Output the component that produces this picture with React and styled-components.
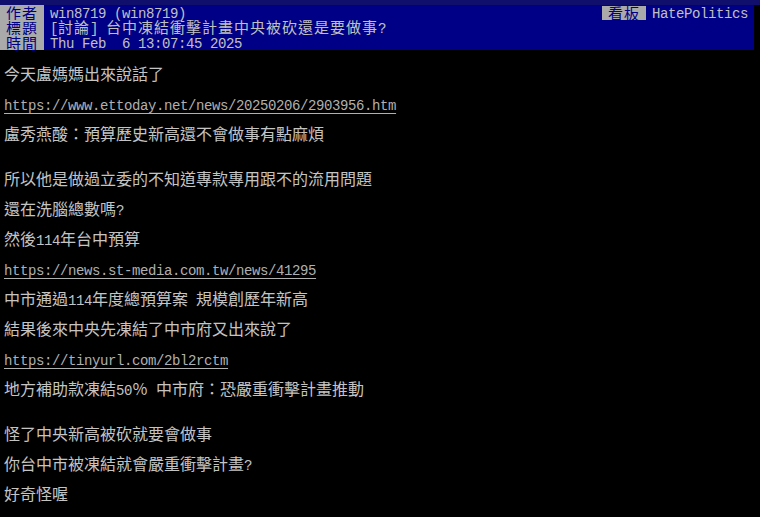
import React from 'react'
import styled, { createGlobalStyle } from 'styled-components'

const GlobalStyle = createGlobalStyle`
  html, body {
    margin: 0;
    padding: 0;
    background: #000;
  }
  body {
    font-family: "Noto Sans CJK TC", "Liberation Mono", monospace;
    font-size: 16px;
    color: #c4c4c4;
  }
`

const Page = styled.div`
  width: 760px;
  height: 517px;
  background: #000;
  overflow: hidden;
`

const TopStrip = styled.div`
  height: 5px;
  background: #10106c;
`

const Header = styled.div`
  width: 754px;
  background: #000087;
  font-size: 15px;
`

const Row = styled.div`
  display: flex;
  align-items: center;
  height: 15px;
  line-height: 15px;
`

const Label = styled.span`
  display: inline-block;
  height: 15px;
  line-height: 15px;
  width: 32px;
  padding: 0 6px;
  background: #aaaaaa;
  color: #000087;
  letter-spacing: 1px;
  margin-right: 6px;
`

const Value = styled.span`
  flex: 1;
  color: #c0c0c0;
  letter-spacing: 1px;
  white-space: pre;
`

const BoardLabel = styled(Label)`
  height: 14px;
  line-height: 14px;
  margin-top: 1px;
`

const BoardName = styled.span`
  color: #c0c0c0;
  margin-right: 6px;
`

const Mono = styled.span`
  font-family: "Liberation Mono", monospace;
  font-size: 14px;
  letter-spacing: -0.4px;
  white-space: pre;
`

const Body = styled.div`
  padding: 8px 4px 0;
`

const Line = styled.div`
  height: 30px;
  line-height: 30px;
  white-space: pre;
`

const Link = styled.span`
  color: #b0b0b0;
  text-decoration: underline;
  text-underline-offset: 3px;
`

const Blank = styled.div`
  height: 15px;
`

function Txt({ children }) {
  const parts = children.split(/([\x20-\x7e]+)/).filter(Boolean)
  return parts.map((p, i) =>
    /^[\x20-\x7e]+$/.test(p) ? <Mono key={i}>{p}</Mono> : <React.Fragment key={i}>{p}</React.Fragment>
  )
}

const lines = [
  { t: '今天盧媽媽出來說話了' },
  { url: 'https://www.ettoday.net/news/20250206/2903956.htm' },
  { t: '盧秀燕酸：預算歷史新高還不會做事有點麻煩' },
  { blank: true },
  { t: '所以他是做過立委的不知道專款專用跟不的流用問題' },
  { t: '還在洗腦總數嗎?' },
  { t: '然後114年台中預算' },
  { url: 'https://news.st-media.com.tw/news/41295' },
  { t: '中市通過114年度總預算案 規模創歷年新高' },
  { t: '結果後來中央先凍結了中市府又出來說了' },
  { url: 'https://tinyurl.com/2bl2rctm' },
  { t: '地方補助款凍結50％ 中市府：恐嚴重衝擊計畫推動' },
  { blank: true },
  { t: '怪了中央新高被砍就要會做事' },
  { t: '你台中市被凍結就會嚴重衝擊計畫?' },
  { t: '好奇怪喔' },
]

export default function App() {
  return (
    <Page>
      <GlobalStyle />
      <TopStrip />
      <Header>
        <Row>
          <Label>作者</Label>
          <Value><Txt>win8719 (win8719)</Txt></Value>
          <BoardLabel>看板</BoardLabel>
          <BoardName><Txt>HatePolitics</Txt></BoardName>
        </Row>
        <Row>
          <Label>標題</Label>
          <Value><Txt>[</Txt>討論<Txt>] </Txt>台中凍結衝擊計畫中央被砍還是要做事<Txt>?</Txt></Value>
        </Row>
        <Row>
          <Label>時間</Label>
          <Value><Txt>Thu Feb  6 13:07:45 2025</Txt></Value>
        </Row>
      </Header>
      <Body>
        {lines.map((l, i) =>
          l.blank ? (
            <Blank key={i} />
          ) : l.url ? (
            <Line key={i}><Link><Txt>{l.url}</Txt></Link></Line>
          ) : (
            <Line key={i}><Txt>{l.t}</Txt></Line>
          )
        )}
      </Body>
    </Page>
  )
}
